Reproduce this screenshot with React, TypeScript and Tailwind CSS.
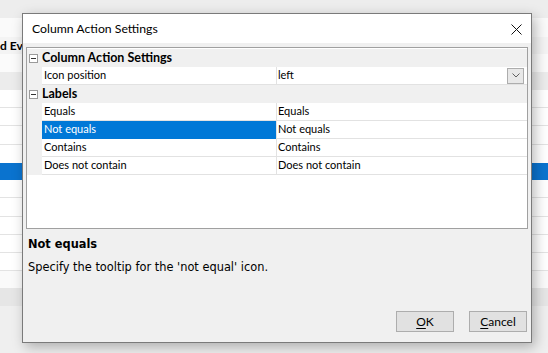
import React from "react";

type BgRow = { h: string; cls: string; text?: string };

// rows of the grid that sits behind the dialog
const bgRows: BgRow[] = [
  { h: "h-[18px]", cls: "bg-[#ededed]" },
  { h: "h-[19px]", cls: "bg-[#fafafa]" },
  { h: "h-[17px]", cls: "bg-[#f4f4f4]", text: "d Events" },
  { h: "h-[18px]", cls: "bg-[#fbfbfb]" },
  { h: "h-[18px]", cls: "bg-[#ececec]" },
  { h: "h-[18px]", cls: "bg-white border-b border-[#e3e3e3]" },
  { h: "h-[18px]", cls: "bg-white border-b border-[#e3e3e3]" },
  { h: "h-[19px]", cls: "bg-white border-b border-[#e3e3e3]" },
  { h: "h-[18px]", cls: "bg-white" },
  { h: "h-[17px]", cls: "bg-[#0a73cf]" },
  { h: "h-[18px]", cls: "bg-white border-b border-[#e3e3e3]" },
  { h: "h-[19px]", cls: "bg-white border-b border-[#e3e3e3]" },
  { h: "h-[18px]", cls: "bg-white border-b border-[#e3e3e3]" },
  { h: "h-[18px]", cls: "bg-white border-b border-[#e3e3e3]" },
  { h: "h-[18px]", cls: "bg-white border-b border-[#e3e3e3]" },
  { h: "h-[17px]", cls: "bg-[#fafafa]" },
  { h: "h-[18px]", cls: "bg-[#e6e6e6]" },
  { h: "h-[40px]", cls: "bg-[#efefef]" },
];

function MinusBox() {
  return (
    <div className="flex h-[9px] w-[9px] items-center justify-center border border-[#9a9a9a] bg-white">
      <div className="h-px w-[5px] bg-[#333]" />
    </div>
  );
}

function Category({ label }: { label: string }) {
  return (
    <div className="flex h-[18px] items-center bg-[#f0f0f0]">
      <div className="flex w-[15px] pl-[2px]">
        <MinusBox />
      </div>
      <span className="text-[12.5px] font-bold text-black">{label}</span>
    </div>
  );
}

function Prop({
  name,
  value,
  selected,
  dropdown,
}: {
  name: string;
  value: string;
  selected?: boolean;
  dropdown?: boolean;
}) {
  return (
    <div className="flex h-[18px] bg-[#f0f0f0]">
      <div className="w-[15px]" />
      <div
        className={
          selected
            ? "flex w-[234px] items-center border-b border-[#0078d7] bg-[#0078d7] pl-[2px] text-white"
            : "flex w-[234px] items-center border-b border-[#e2e2e2] bg-white pl-[2px] text-black"
        }
      >
        {name}
      </div>
      <div className="w-px bg-[#e2e2e2]" />
      <div className="flex flex-1 items-center border-b border-[#e2e2e2] bg-white pl-[1px] pr-[3px] text-black">
        <span className="flex-1">{value}</span>
        {dropdown && (
          <div className="flex h-[16px] w-[17px] items-center justify-center border border-[#adadad] bg-[#e8e8e8]">
            <svg width="8" height="5" viewBox="0 0 8 5">
              <path d="M0.5 0.5 L4 4 L7.5 0.5" fill="none" stroke="#606060" strokeWidth="1" />
            </svg>
          </div>
        )}
      </div>
    </div>
  );
}

function Button({ hot, rest }: { hot: string; rest: string }) {
  return (
    <button className="flex h-[21px] w-[58px] items-center justify-center border border-[#adadad] bg-[#e1e1e1] text-[12px] text-black">
      <span className="underline decoration-1 underline-offset-2">{hot}</span>
      <span>{rest}</span>
    </button>
  );
}

export default function App() {
  return (
    <div className="relative h-[353px] w-[548px] overflow-hidden bg-[#efefef] font-['Lato',sans-serif]">
      <div className="flex flex-col">
        {bgRows.map((r, i) => (
          <div key={i} className={`${r.h} ${r.cls} flex items-center`}>
            {r.text && (
              <span className="text-[12px] font-bold text-black">{r.text}</span>
            )}
          </div>
        ))}
      </div>

      <div className="absolute left-[22px] top-[13px] flex h-[330px] w-[510px] flex-col border border-[#7a7a7a] bg-[#f0f0f0] shadow-[3px_4px_12px_rgba(0,0,0,0.28)]">
        <div className="flex h-[29px] items-center bg-white pl-[9px] pr-[9px] pt-[2px]">
          <span className="flex-1 text-[12.25px] text-black">Column Action Settings</span>
          <svg width="11" height="11" viewBox="0 0 11 11">
            <path d="M0.5 0.5 L10.5 10.5 M10.5 0.5 L0.5 10.5" stroke="#111" strokeWidth="1" />
          </svg>
        </div>

        <div className="flex flex-1 flex-col px-[3px] pb-[10px] pt-[4px]">
          <div className="flex h-[182px] flex-col border border-[#a0a0a0] bg-white pt-px text-[11px]">
            <Category label="Column Action Settings" />
            <Prop name="Icon position" value="left" dropdown />
            <Category label="Labels" />
            <Prop name="Equals" value="Equals" />
            <Prop name="Not equals" value="Not equals" selected />
            <Prop name="Contains" value="Contains" />
            <Prop name="Does not contain" value="Does not contain" />
          </div>

          <div className="mt-[8px] pl-[2px] font-['DejaVu_Sans',sans-serif] text-[11.4px] text-black">
            <div className="font-bold leading-[14px]">Not equals</div>
            <div className="mt-[9px] leading-[14px]">
              Specify the tooltip for the 'not equal' icon.
            </div>
          </div>

          <div className="flex-1" />

          <div className="flex justify-end gap-[15px] pr-[1px]">
            <Button hot="O" rest="K" />
            <Button hot="C" rest="ancel" />
          </div>
        </div>
      </div>
    </div>
  );
}
